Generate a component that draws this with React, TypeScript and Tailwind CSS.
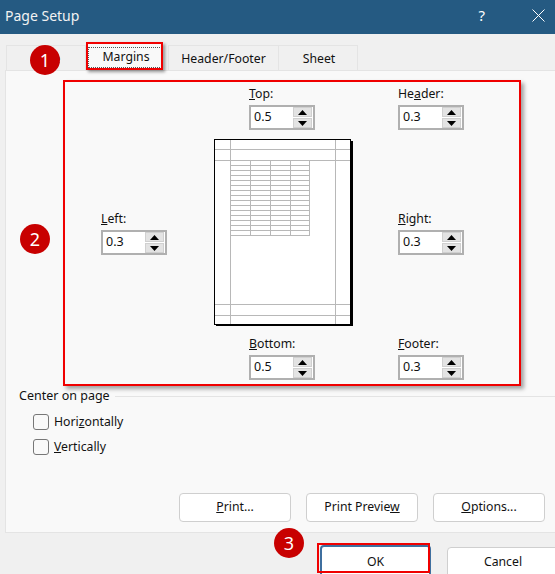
const font = { fontFamily: '"Noto Sans", sans-serif' };

function Spinner({ value }: { value: string }) {
  return (
    <div className="flex h-[25px] w-[66px] items-center border-2 border-[#b0b0b0] bg-white pr-px">
      <span className="flex-1 pl-[3px] text-[12.5px] leading-none text-[#111]">{value}</span>
      <div className="flex h-[21px] w-[19px] flex-col gap-px">
        {["M4.5 0 9 5H0z", "M0 0h9L4.5 5z"].map((d) => (
          <div key={d} className="flex flex-1 items-center justify-center border border-[#d0d0d0] bg-[#e3e3e3]">
            <svg width="9" height="5" viewBox="0 0 9 5"><path d={d} fill="#000" /></svg>
          </div>
        ))}
      </div>
    </div>
  );
}

function Field({ u, pre, post, value }: { u: string; pre?: string; post: string; value: string }) {
  return (
    <div className="flex flex-col gap-[3px]">
      <span className="h-[17px] text-[12.25px] leading-[17px] text-[#111]">
        {pre}<span className="underline">{u}</span>{post}
      </span>
      <Spinner value={value} />
    </div>
  );
}

function Preview() {
  const rows = Array.from({ length: 16 }, (_, i) => 160.5 + i * 5);
  return (
    <svg width="140" height="187" viewBox="214 139 140 187" className="block">
      <rect x="216" y="141" width="137" height="185" fill="#000" />
      <rect x="214.5" y="139.5" width="136" height="185" fill="#fff" stroke="#000" />
      <g stroke="#b8b8b8" strokeWidth="1" fill="none">
        <path d="M230.5 140V324M335.5 140V324M215 149.5H350M215 160.5H350M215 304.5H350M215 315.5H350" />
        {rows.map((y) => <path key={y} d={`M230 ${y}H310`} />)}
        <path d="M250.5 160V236M270.5 160V236M290.5 160V236M309.5 160V236" />
      </g>
    </svg>
  );
}

function Btn({ children }: { children: React.ReactNode }) {
  return (
    <div className="flex h-[29px] w-[112px] shrink-0 items-center justify-center rounded-[4px] border border-[#cfcfcf] bg-white text-[12.25px] text-[#111]">
      {children}
    </div>
  );
}

function Circle({ n, cls }: { n: number; cls: string }) {
  return (
    <div className={`absolute flex h-[30px] w-[30px] items-center justify-center rounded-full bg-[#c80000] text-[18px] leading-none text-white ${cls}`}>
      {n}
    </div>
  );
}

export default function App() {
  return (
    <div style={font} className="relative h-[574px] w-[555px] overflow-hidden bg-[#f0f0f0]">
      <div className="flex h-[34px] items-center justify-between bg-[#255a82] pb-[4px] pl-[5px] pr-[10px] text-white">
        <span className="text-[14px] text-[#f2f2f2]">Page Setup</span>
        <div className="flex items-center gap-[47px]">
          <span className="text-[15px]">?</span>
          <svg width="13" height="13" viewBox="0 0 13 13"><path d="M.5.5l12 12M12.5.5l-12 12" stroke="#fff" fill="none" /></svg>
        </div>
      </div>

      <div className="flex h-[36px] items-end pl-[6px] text-[12.25px] text-[#111]">
        <div className="flex h-[25px] w-[80px] shrink-0 items-center justify-center border border-b-0 border-[#e4e4e4] pt-[3px]">Page</div>
        <div className="flex h-[27px] w-[78px] shrink-0 items-center justify-center bg-[#f9f9f9] px-[2px] pb-[2px] pt-[4px]">
          <div className="flex h-full w-full items-center justify-center border border-dotted border-[#555] pl-[2px]">Margins</div>
        </div>
        <div className="ml-[4px] flex h-[25px] w-[111px] shrink-0 items-center justify-center border border-b-0 border-[#e4e4e4] pt-[3px]">Header/Footer</div>
        <div className="flex h-[25px] w-[79px] shrink-0 items-center justify-center border border-b-0 border-l-0 border-[#e4e4e4] pl-[2px] pt-[3px]">Sheet</div>
      </div>

      <div className="ml-[5px] h-[463px] w-[550px] border border-r-0 border-[#e4e4e4] bg-[#f9f9f9]">
        <div className="grid grid-cols-[113px_184px_66px] grid-rows-[45px_187px_45px] items-center gap-y-[9px] pl-[95px] pt-[14px]">
          <div />
          <div className="pl-[35px]"><Field u="T" post="op:" value="0.5" /></div>
          <Field pre="He" u="a" post="der:" value="0.3" />
          <Field u="L" post="eft:" value="0.3" />
          <Preview />
          <Field u="R" post="ight:" value="0.3" />
          <div />
          <div className="pl-[35px]"><Field u="B" post="ottom:" value="0.5" /></div>
          <Field u="F" post="ooter:" value="0.3" />
        </div>

        <div className="mt-[7px] flex h-[18px] items-center gap-[5px] pl-[13px] text-[12.5px] text-[#111]">
          <span>Center on page</span>
          <div className="h-px flex-1 bg-[#e4e4e4]" />
        </div>
        <div className="mt-[9px] flex flex-col gap-[9px] pl-[27px] text-[12.25px] text-[#111]">
          <div className="flex h-[16px] items-center gap-[5px]">
            <div className="h-[16px] w-[16px] rounded-[3px] border border-[#777] bg-[#f9f9f9]" />
            <span className="pt-px">Hori<span className="underline">z</span>ontally</span>
          </div>
          <div className="flex h-[16px] items-center gap-[5px]">
            <div className="h-[16px] w-[16px] rounded-[3px] border border-[#777] bg-[#f9f9f9]" />
            <span className="pt-px"><span className="underline">V</span>ertically</span>
          </div>
        </div>
        <div className="mt-[38px] flex gap-[15px] pl-[173px]">
          <Btn><span><span className="underline">P</span>rint...</span></Btn>
          <Btn><span>Print Previe<span className="underline">w</span></span></Btn>
          <Btn><span><span className="underline">O</span>ptions...</span></Btn>
        </div>
      </div>

      <div className="mt-[12px] flex gap-[16px] pl-[320px]">
        <div className="flex h-[40px] w-[111px] shrink-0 justify-center rounded-[4px] border-2 border-[#3f6f9f] bg-white pt-[6px] text-[12.25px] text-[#111]">OK</div>
        <div className="mt-[2px] flex h-[40px] w-[112px] shrink-0 justify-center rounded-[4px] border border-[#cfcfcf] bg-white pt-[5px] text-[12.25px] text-[#111]">Cancel</div>
      </div>

      <div className="absolute left-[86px] top-[42px] h-[28px] w-[77px] border-2 border-[#f00000] shadow-[2px_2px_3px_rgba(0,0,0,0.4)]" />
      <div className="absolute left-[63px] top-[80px] h-[306px] w-[458px] border-2 border-[#f00000] shadow-[3px_3px_4px_rgba(0,0,0,0.35)]" />
      <div className="absolute left-[317px] top-[543px] h-[30px] w-[113px] border-2 border-[#f00000]" />
      <Circle n={1} cls="left-[30px] top-[45px]" />
      <Circle n={2} cls="left-[20px] top-[224px]" />
      <Circle n={3} cls="left-[274px] top-[528px]" />
    </div>
  );
}
